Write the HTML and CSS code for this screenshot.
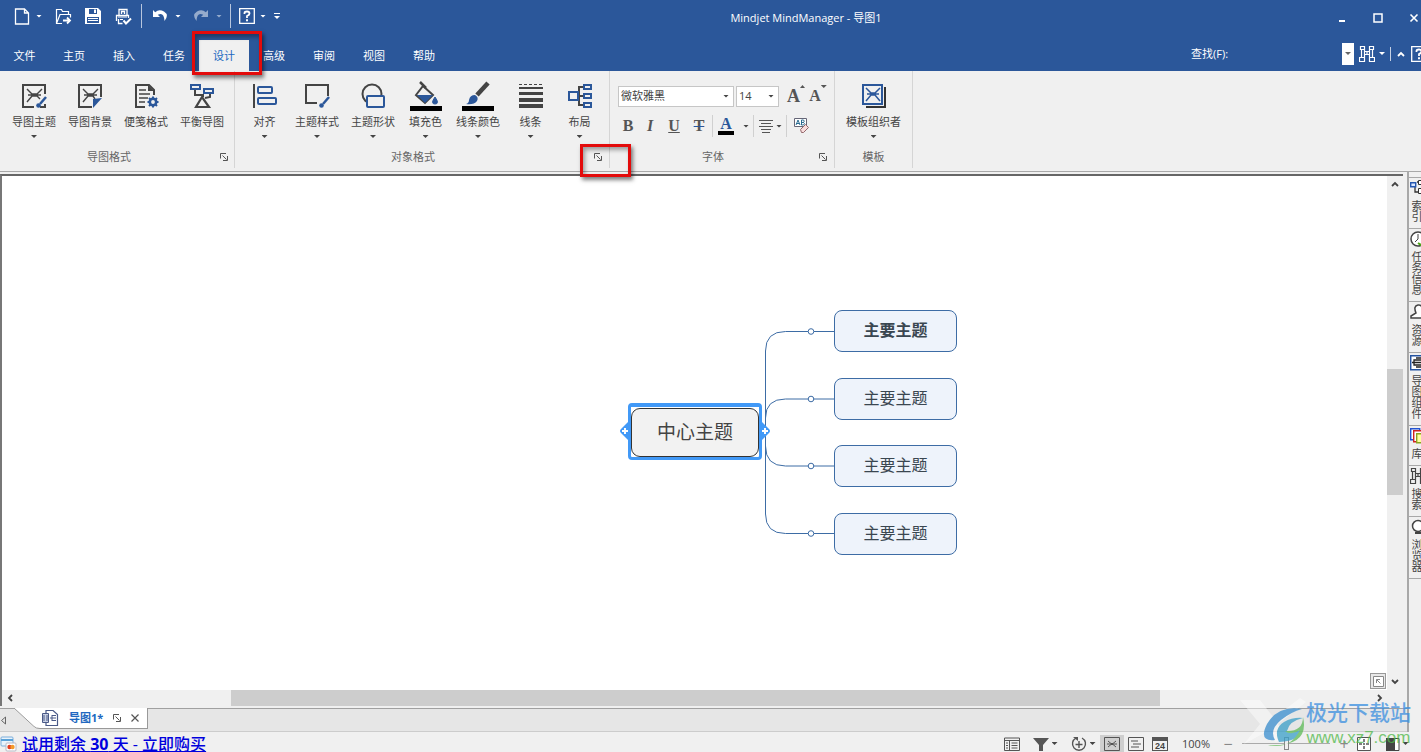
FILE: index.html
```html
<!DOCTYPE html>
<html lang="zh-CN">
<head>
<meta charset="utf-8">
<title>Mindjet MindManager - 导图1</title>
<link rel="stylesheet" href="styles.css">
</head>
<body>
<svg class="defs" width="0" height="0" aria-hidden="true">
  <symbol id="launch" viewBox="0 0 8 8"><path d="M.5 5.500V.5H6M2.500 2.500l4 4M7.500 3v4.500H3" fill="none" stroke="#555"/></symbol>
  <symbol id="help" viewBox="0 0 16 16"><path d="M.7.7h14.600v14.600H.7z" fill="none" stroke="#fff" stroke-width="1.300"/><path d="M5.500 6V5q0-1.500 2.500-1.500T10.500 5.500Q10.500 7 8 8v2" fill="none" stroke="#fff" stroke-width="1.800"/><path d="M7 11.300h2v2H7z" fill="#fff"/></symbol>
  <symbol id="binoc" viewBox="0 0 16 16"><path d="M1.500.5h4v3h-4zM10.500.5h4v3h-4zM2.500 3.500v8M5.500 3.500v8M10.500 3.500v8M13.500 3.500v8M.5 11.500h5v4h-5zM10.500 11.500h5v4h-5zM5.500 5.500h5M5.500 8.500h5M8 5.500v3" fill="none" stroke="currentColor" stroke-width="1.200"/></symbol>
</svg>

<header class="top">
  <div class="titlebar">
    <div class="quick">
      <button class="q q-new" aria-label="新建"><svg width="16" height="17"><path d="M1.500 1h9l4 4v11h-13zM10.500 1v4h4" fill="none" stroke="#fff" stroke-width="1.300"/></svg></button>
      <button class="q-more" aria-label="新建选项"><i class="caret"></i></button>
      <button class="q" aria-label="打开"><svg width="17" height="17"><path d="M7 15.500H1.500V1.500h5l1 2h6v3M1.500 15.500l3.500-9h10.500v3" fill="none" stroke="#fff" stroke-width="1.200"/><path d="M8 12.500h6M12 9.500l3 3-3 3" fill="none" stroke="#fff" stroke-width="1.800"/></svg></button>
      <button class="q" aria-label="保存"><svg width="16" height="16"><path fill="#fff" fill-rule="evenodd" d="M0 0h13l3 3v13H0zM4 1v5h8V1zM2 9v6h12V9z"/><path fill="#fff" d="M9 1.500h2V5H9zM3 10h10v1H3zM3 12h10v1H3z"/></svg></button>
      <button class="q" aria-label="打印"><svg width="17" height="17"><path d="M4 7V1.500h8V7M6.500 6V3.500h3V6M1.500 13V7.500h12V10M3.500 11v4.500h4" fill="none" stroke="#fff" stroke-width="1.300"/><path d="M3 9h9M5 11.500h3" stroke="#fff"/><path d="M8.500 12.500l2.500 3 5-5" fill="none" stroke="#fff" stroke-width="2"/></svg></button>
      <span class="q-sep"></span>
      <button class="q" aria-label="撤消"><svg width="16" height="14"><path d="M1 1v7h7L5.800 5.800Q12 2.500 12.500 12 17.500 6 12 2.500 7-.5 3.200 3.200z" fill="#fff"/></svg></button>
      <button class="q-more" aria-label="撤消选项"><i class="caret"></i></button>
      <button class="q faded" aria-label="重做"><svg width="16" height="14"><path d="M15 1v7H8l2.200-2.200Q4 2.500 3.500 12-1.500 6 4 2.500 9-.5 12.800 3.200z" fill="#fff"/></svg></button>
      <button class="q-more faded" aria-label="重做选项"><i class="caret"></i></button>
      <span class="q-sep"></span>
      <button class="q q-help" aria-label="帮助"><svg width="16" height="16"><use href="#help"/></svg></button>
      <button class="q-more" aria-label="帮助选项"><i class="caret"></i></button>
      <button class="q-cust" aria-label="自定义"><i class="bar"></i><i class="caret"></i></button>
    </div>
    <h1 class="title">Mindjet MindManager - 导图1</h1>
    <div class="winctl">
      <button aria-label="最小化"><svg width="10" height="10"><path d="M2 8h6" stroke="#fff" stroke-width="2"/></svg></button>
      <button aria-label="最大化"><svg width="10" height="10"><path d="M1 1h8v8H1z" fill="none" stroke="#fff" stroke-width="1.500"/></svg></button>
      <button aria-label="关闭"><svg width="10" height="10"><path d="M1.500 1.500l7 7M8.500 1.500l-7 7" stroke="#fff" stroke-width="1.600"/></svg></button>
    </div>
  </div>
  <div class="menubar">
    <nav class="tabs">
      <button>文件</button><button>主页</button><button>插入</button><button>任务</button><button class="on">设计</button><button>高级</button><button>审阅</button><button>视图</button><button>帮助</button>
    </nav>
    <div class="find">
      <label for="find">查找(F):</label>
      <input id="find" type="text">
      <button class="find-drop" aria-label="查找记录"><i class="caret"></i></button>
      <button class="find-go" aria-label="查找"><svg width="16" height="16"><use href="#binoc"/></svg><i class="caret"></i></button>
      <span class="find-sep"></span>
      <button class="find-up" aria-label="折叠功能区"><svg width="8" height="6"><path d="M1 5l3-3 3 3" fill="none" stroke="#fff" stroke-width="1.800"/></svg></button>
      <button class="find-help" aria-label="帮助"><svg width="16" height="16"><use href="#help"/></svg></button>
    </div>
  </div>
</header>

<section class="ribbon">
  <div class="group">
    <div class="tools">
      <button class="tool"><svg width="26" height="26"><path d="M24 11V2H2v22h11M19 24h5v-3" fill="none" stroke="#444" stroke-width="2"/><path d="M6 6l5 5h5l5-5M6 19l5-6h5l3 3M7 12h13" fill="none" stroke="#444" stroke-width="1.400"/><path d="M25 14l-6 7" stroke="#2b579a" stroke-width="2.500"/><circle cx="17.500" cy="22.500" r="2.300" fill="#2b579a"/></svg>导图主题<i class="caret"></i></button>
      <button class="tool"><svg width="26" height="26"><path d="M24 14V2H2v22h13" fill="none" stroke="#444" stroke-width="2"/><path d="M6 6l5 5h5l5-5M6 19l5-6h5l2 3M7 12h13" fill="none" stroke="#444" stroke-width="1.400"/><path d="M25 15l-9 10v-9z" fill="#2b579a"/></svg>导图背景</button>
      <button class="tool"><svg width="26" height="26"><path d="M12 24H3V2h13l5 5v5" fill="none" stroke="#444" stroke-width="2"/><path d="M15 2v6h6z" fill="#444"/><path d="M6 7h7M6 11h11M6 15h9M6 19h6" stroke="#444" stroke-width="1.300"/><circle cx="20" cy="19" r="3.200" fill="none" stroke="#2b579a" stroke-width="2.600"/><path d="M20 13.500v2M20 22.500v2M14.500 19h2M23.500 19h2M16 15l1.500 1.500M22.500 21.500L24 23M24 15l-1.500 1.500M17.500 21.500L16 23" stroke="#2b579a" stroke-width="2"/></svg>便笺格式</button>
      <button class="tool"><svg width="26" height="26"><path d="M6 6v6h8M21 10v4l-5 1M14 11v3" fill="none" stroke="#444" stroke-width="2"/><path d="M2 2h9v4H2zM15 6h9v4h-9z" fill="#f0f0f0" stroke="#2b579a" stroke-width="2"/><path d="M13 14L7 24h13z" fill="none" stroke="#444" stroke-width="2.200"/></svg>平衡导图</button>
    </div>
    <div class="gname"><span>导图格式</span><button class="launch" aria-label="导图格式选项"><svg width="8" height="8"><use href="#launch"/></svg></button></div>
  </div>

  <div class="group">
    <div class="tools">
      <button class="tool"><svg width="26" height="26"><path d="M2 1v24" stroke="#444" stroke-width="2"/><rect x="6" y="4" width="14" height="6" rx="1" fill="none" stroke="#2b579a" stroke-width="2"/><rect x="6" y="15" width="18" height="6" rx="1" fill="none" stroke="#2b579a" stroke-width="2"/></svg>对齐<i class="caret"></i></button>
      <button class="tool"><svg width="26" height="26"><path d="M13 20H2V2h22v11" fill="none" stroke="#444" stroke-width="2"/><path d="M25 14l-6 7" stroke="#2b579a" stroke-width="2.500"/><circle cx="17.500" cy="22.500" r="2.300" fill="#2b579a"/></svg>主题样式<i class="caret"></i></button>
      <button class="tool"><svg width="26" height="26"><circle cx="12" cy="11" r="9.500" fill="none" stroke="#444" stroke-width="2"/><rect x="7" y="13" width="17" height="11" rx="1" fill="#f0f0f0" stroke="#2b579a" stroke-width="2"/></svg>主题形状<i class="caret"></i></button>
      <button class="tool"><svg width="32" height="30"><path d="M13 5l10 9-8 8-9-8z" fill="none" stroke="#444" stroke-width="2"/><path d="M7 14h16l-8 8z" fill="#2b579a"/><path d="M10 1l6 6" stroke="#444" stroke-width="2.500"/><path d="M25 16q-5 7 0 7t0-7" fill="#2b579a" stroke="#2b579a"/><path d="M0 25h32v5H0z"/></svg>填充色<i class="caret"></i></button>
      <button class="tool"><svg width="32" height="30"><path d="M26 2L15 14" stroke="#444" stroke-width="4.500"/><path d="M13 14q4 2 2 6-3 4-11 3 3-1 3-4 1-5 6-5" fill="#2b579a"/><path d="M0 25h32v5H0z"/></svg>线条颜色<i class="caret"></i></button>
      <button class="tool"><svg width="26" height="26"><path d="M1 1.500h24" stroke="#444" stroke-dasharray="3 2"/><path d="M1 5h24" stroke="#444" stroke-width="2"/><path d="M1 10.500h24" stroke="#444" stroke-width="3"/><path d="M1 17h24M1 23h24" stroke="#444" stroke-width="4"/></svg>线条<i class="caret"></i></button>
      <button class="tool"><svg width="26" height="26"><path d="M17 4h-5v18h5M11 13h6" fill="none" stroke="#444" stroke-width="2"/><path d="M2 9h9v8H2zM17 2h7v4h-7zM17 11h7v4h-7zM17 20h7v4h-7z" fill="#f0f0f0" stroke="#2b579a" stroke-width="2"/></svg>布局<i class="caret"></i></button>
    </div>
    <div class="gname"><span>对象格式</span><button class="launch" aria-label="对象格式选项"><svg width="8" height="8"><use href="#launch"/></svg></button></div>
  </div>

  <div class="group">
    <div class="fonts">
      <div class="frow">
        <span class="pick face"><select aria-label="字体"><option>微软雅黑</option></select><i class="caret"></i></span>
        <span class="pick size"><select aria-label="字号"><option>14</option></select><i class="caret"></i></span>
        <button class="grow" aria-label="增大字号">A<i class="up"></i></button>
        <button class="grow small" aria-label="减小字号">A<i class="caret"></i></button>
      </div>
      <div class="frow">
        <button class="f">B</button>
        <button class="f"><em>I</em></button>
        <button class="f"><u>U</u></button>
        <button class="f strike"><s>T</s></button>
        <span class="f-sep"></span>
        <button class="fcolor" aria-label="字体颜色"><b>A</b></button>
        <button class="fdrop" aria-label="字体颜色选项"><i class="caret"></i></button>
        <span class="f-sep"></span>
        <button class="falign" aria-label="对齐方式"><svg width="16" height="14"><path d="M1 1.500h14M3 4.500h10M1 7.500h14M3 10.500h10M4 13.500h8" stroke="#555"/></svg><i class="caret"></i></button>
        <span class="f-sep"></span>
        <button class="fclear" aria-label="清除格式"><svg width="18" height="18"><path d="M1.500 1.500h12v8h-12z" fill="#fff" stroke="#667"/><path d="M3 8l2-5 2 5M3.500 6.500h3M8.500 3v5h2q2-1.500 0-2.500h-2 2q1.500-1.500 0-2.500z" fill="none" stroke="#2b6c91"/><path d="M7.500 12.500l5-5 3 3-5 5h-2z" fill="#f8dcdc" stroke="#93686c"/></svg></button>
      </div>
    </div>
    <div class="gname"><span>字体</span><button class="launch" aria-label="字体选项"><svg width="8" height="8"><use href="#launch"/></svg></button></div>
  </div>

  <div class="group">
    <div class="tools">
      <button class="tool"><svg width="26" height="26"><path d="M24 4v20H5" fill="none" stroke="#333" stroke-width="2"/><path d="M2 2h19v19H2z" fill="#f0f0f0" stroke="#2b579a" stroke-width="2"/><path d="M5 5l5 5h4l5-5M5 18l5-6h4l5 6M6 11h12" fill="none" stroke="#2b579a" stroke-width="1.500"/></svg>模板组织者<i class="caret"></i></button>
    </div>
    <div class="gname solo"><span>模板</span></div>
  </div>
</section>

<main class="work">
  <div class="doc">
    <div class="view">
      <div class="canvas">
        <div class="map">
          <svg class="links" width="338" height="245" fill="none" stroke="#3d6ca5"><path d="M146.500 122V41q0-19.500 20-19.500H215M146.500 122v-14q0-19 20-19H215M146.500 122v14q0 20 20 20H215M146.500 122v82q0 19.500 20 19.500H215"/><g fill="#fff"><circle cx="192" cy="21.500" r="2.800"/><circle cx="192" cy="89" r="2.800"/><circle cx="192" cy="156" r="2.800"/><circle cx="192" cy="223.500" r="2.800"/></g></svg>
          <div class="center"><div>中心主题</div></div>
          <svg class="handle left" width="11" height="22"><path d="M10 1v20L2 13q-2-2 0-4z" fill="#4199f7"/><path d="M6 8v6M3 11h6" stroke="#fff" stroke-width="2"/></svg>
          <svg class="handle right" width="11" height="22"><path d="M1 1v20l8-8q2-2 0-4z" fill="#4199f7"/><path d="M5 8v6M2 11h6" stroke="#fff" stroke-width="2"/></svg>
          <div class="topic t1">主要主题</div>
          <div class="topic t2">主要主题</div>
          <div class="topic t3">主要主题</div>
          <div class="topic t4">主要主题</div>
        </div>
        <button class="overview" aria-label="导航"><svg width="11" height="11"><path d="M.5.5h10v10H.5z" fill="#fff" stroke="#888"/><path d="M3.500 7V3.500H7M3.500 3.500l4 4" fill="none" stroke="#888"/></svg></button>
      </div>
      <div class="vscroll">
        <svg width="8" height="6"><path d="M1 5l3-3 3 3" fill="none" stroke="#444" stroke-width="1.800"/></svg>
        <div class="track"><i></i></div>
        <svg width="8" height="6"><path d="M1 1l3 3 3-3" fill="none" stroke="#444" stroke-width="1.800"/></svg>
      </div>
    </div>
    <div class="hscroll">
      <svg width="6" height="8"><path d="M5 1L2 4l3 3" fill="none" stroke="#444" stroke-width="1.800"/></svg>
      <div class="track"><i></i></div>
      <svg width="6" height="8"><path d="M1 1l3 3-3 3" fill="none" stroke="#444" stroke-width="1.800"/></svg>
    </div>
    <div class="docbar">
      <button class="prev" aria-label="上一个"><svg width="7" height="9"><path d="M5.500 1v7l-4-3.500z" fill="none" stroke="#666"/></svg></button>
      <svg class="slant" width="26" height="21"><path d="M0 0h26v20h-5z" fill="#fff"/><path d="M0 0l20 18.500q2 2 6 2" fill="none" stroke="#999"/></svg>
      <div class="doctab">
        <svg width="17" height="16"><path d="M4 3V.500h7l4.500 4V15.500H4V13" fill="#fff" stroke="#4a5a88" stroke-width="1.200"/><path d="M.5 3.500h6v9h-6z" fill="#c9d1e4" stroke="#4a5a88"/><path d="M2 5v6M5 5v6M8 8h4M10 5v6M10 5.500h4M10 10.500h4M12 8h2" stroke="#4a5a88"/></svg>
        <b>导图1*</b>
        <button aria-label="窗口选项"><svg width="8" height="8"><use href="#launch"/></svg></button>
        <button aria-label="关闭导图"><svg width="8" height="8"><path d="M.5.5l7 7M7.500.5l-7 7" stroke="#555" stroke-width="1.200"/></svg></button>
      </div>
    </div>
  </div>
  <aside class="side">
    <button><svg width="16" height="16"><path d="M5 6v6h5M10 2h-3" fill="none" stroke="#333" stroke-width="1.300"/><path d="M.700 2.700h5v4h-5z" fill="#d8e6ff" stroke="#2457b0" stroke-width="1.400"/><path d="M8.500.5h7v4h-7zM8.500 8.500h7v5h-7z" fill="#fff" stroke="#333"/></svg><span>索引</span></button>
    <button><svg width="16" height="16"><circle cx="8" cy="8" r="7" fill="#fff" stroke="#444" stroke-width="1.500"/><path d="M8 3v5l-3 3" fill="none" stroke="#444"/><path d="M8 12l3 2 4-5" fill="none" stroke="#4ba515" stroke-width="2"/></svg><span>任务信息</span></button>
    <button><svg width="16" height="16"><path d="M1 14v-2l5-3q-3-7 2-8t4 8l4 3v2z" fill="#fff" stroke="#444" stroke-width="1.500"/></svg><span>资源</span></button>
    <button><svg width="16" height="16"><path d="M.7.700h15v14H.7z" fill="#fff" stroke="#2453a0" stroke-width="1.500"/><path d="M4 5h8v5H4zM6 3h7M2 7.500h10M6 12h7" fill="none" stroke="#222" stroke-width="1.300"/></svg><span>导图组件</span></button>
    <button><svg width="16" height="16"><path d="M.7.7h9v11h-9z" fill="#fff" stroke="#2453d0" stroke-width="1.400"/><path d="M3.700 2.700h9v11h-9z" fill="#fff" stroke="#d02020" stroke-width="1.400"/><path d="M6.700 5.700h9v9h-9z" fill="#ffffa0" stroke="#8aa320" stroke-width="1.400"/></svg><span>库</span></button>
    <button><svg width="16" height="16"><use href="#binoc"/></svg><span>搜索</span></button>
    <button><svg width="16" height="16"><circle cx="8" cy="7" r="5.500" fill="#fff" stroke="#444" stroke-width="1.500"/><path d="M5 14h9" stroke="#444" stroke-width="2"/></svg><span>浏览器</span></button>
  </aside>
</main>

<footer class="status">
  <svg width="17" height="16"><rect x="1" y="1" width="12" height="9" rx="1" fill="#e9f3fb" stroke="#7caedb"/><path d="M1 3h12v2H1z" fill="#5aa2d8"/><rect x="6" y="7" width="10" height="8" rx="1" fill="#fff" stroke="#b9b9c4"/><circle cx="9.500" cy="11" r="2.200" fill="#e33c1f"/><circle cx="12.500" cy="11" r="2.200" fill="#f49a2b"/></svg>
  <a href="#buy">试用剩余 <b>30</b> 天 - 立即购买</a>
  <div class="stools">
    <button aria-label="大纲"><svg width="16" height="14"><path d="M.500 1h15v12.500H.5zM1 3.500h14M5.500 3v10M7.500 6h6M7.500 8.500h6M7.500 11h6M2 6h2M2 8.500h2M2 11h2" fill="none" stroke="#555"/></svg></button>
    <button class="wide" aria-label="筛选"><svg width="16" height="14"><path d="M0 1h16l-6 7v6H6V8z" fill="#555"/></svg><i class="caret"></i></button>
    <button class="wide" aria-label="缩放"><svg width="16" height="16"><path d="M5 2a6.500 6.500 0 1 0 6 0M8 5v7M4.500 8.500h7" fill="none" stroke="#555" stroke-width="1.400"/><path d="M2 1h5v4z" fill="#555"/></svg><i class="caret"></i></button>
    <button class="sel" aria-label="导图视图"><svg width="16" height="14"><path d="M.500.5h15v13H.5zM4 4l3 2.500h2L12 4M4 10l3-2.500h2l3 2.500M3 7h10" fill="none" stroke="#555"/></svg></button>
    <button aria-label="大纲视图"><svg width="16" height="14"><path d="M.500.5h15v13H.5zM3 4h7M5 7h8M3 10h8" fill="none" stroke="#555"/></svg></button>
    <button class="cal" aria-label="日程视图"><span>24</span></button>
    <output for="zoom">100%</output>
    <span class="minus">−</span>
    <input id="zoom" type="range" min="0" max="100" value="50" aria-label="缩放比例">
    <span class="minus">+</span>
    <button class="fit" aria-label="适合窗口"><svg width="14" height="14"><path d="M.500.5h13v13H.5z" fill="#fff" stroke="#555"/><path d="M7 2v3M7 9v3M2 7h3M9 7h3M6 7h2" stroke="#555" stroke-width="1.500"/></svg></button>
    <button class="wide" aria-label="面板"><svg width="14" height="14"><path d="M0 1h9v13H0z" fill="#444"/><path d="M9 1.500h4v12H9" fill="#fff" stroke="#444"/></svg><i class="caret"></i></button>
  </div>
</footer>

<div class="mark mark-tab"></div>
<div class="mark mark-launch"></div>

<div class="brand">
  <svg width="66" height="54"><path d="M0 2h20l14 18L60 0l6 4-28 22 8 12-10 6-10-10-22 12 16-20z" fill="#fff" opacity=".6"/><path d="M62 11Q38 7 27 26q-9 18 8 16-6-10 6-20 10-8 21-11" fill="#3a8fd0"/><path d="M39 44q-6-13 5-20 9-5 19-4-14 3-16 13 11 2 16-4-2 14-24 15" fill="#3a9fc8"/><path d="M28 47q22 5 32-15-9 6-15 1 18 1 18-14 7 30-35 28" fill="#5cba55"/></svg>
  <p><strong>极光下载站</strong><span>www.xz7.com</span></p>
</div>
</body>
</html>
```

FILE: styles.css
```css
* { box-sizing: border-box; }
html, body { height: 100%; }
body {
  margin: 0;
  display: flex;
  flex-direction: column;
  overflow: hidden;
  position: relative;
  background: #f0f0f0;
  color: #444;
  font: 11px/16px "Open Sans", "Noto Sans CJK SC", sans-serif;
}
button, input, select { font: inherit; color: inherit; }
button {
  display: flex;
  align-items: center;
  justify-content: center;
  padding: 0;
  border: 0;
  background: none;
  flex: none;
}
svg { display: block; flex: none; }
.defs { position: absolute; }
.caret {
  width: 6px;
  height: 3px;
  flex: none;
  background: currentColor;
  clip-path: polygon(0 0, 100% 0, 50% 100%);
}

/* title bar and tabs */
.top { background: #2b579a; color: #fff; flex: none; }
.titlebar { display: flex; height: 36px; }
.quick { display: flex; align-items: center; height: 32px; padding-left: 8px; }
.q { width: 30px; height: 24px; }
.q-new { width: 28px; }
.q-help { width: 26px; }
.q-more { width: 11px; height: 24px; justify-content: flex-start; }
.q-new + .q-more { width: 12px; }
.q-sep { width: 1px; height: 24px; margin: 0 3px; background: #b8c6de; }
.faded { opacity: .5; }
.q-cust { width: 12px; height: 24px; flex-direction: column; gap: 2px; }
.bar { width: 6px; height: 1px; background: #fff; }
.title { flex: 1; margin: 0; text-align: center; font-size: 11px; font-weight: 400; line-height: 36px; }
.winctl { display: flex; align-items: center; gap: 26px; width: 92px; padding-left: 8px; flex: none; overflow: hidden; }
.menubar { display: flex; justify-content: space-between; height: 35px; }
.tabs { display: flex; align-items: flex-end; }
.tabs button { width: 50px; height: 31px; }
.tabs button:first-child { width: 49px; }
.tabs .on { background: #f0f0f0; color: #2168c0; }
.find { display: flex; align-items: center; width: 230px; overflow: hidden; }
.find label { flex: none; width: 44px; }
.find input { flex: 1; min-width: 0; height: 22px; border: 0; background: transparent; }
.find-drop { width: 12px; height: 22px; background: #fff; color: #666; }
.find-go { gap: 4px; margin: 0 5px; }
.find-sep { flex: none; width: 1px; height: 14px; background: #c5d0e4; }
.find-up { width: 20px; height: 22px; }
.find-help { width: 10px; justify-content: flex-start; overflow: hidden; }

/* ribbon */
.ribbon { display: flex; flex: none; height: 101px; padding-bottom: 3px; border-bottom: 1px solid #a8a8a8; }
.group { display: flex; flex-direction: column; justify-content: space-between; padding: 10px 4px 0 6px; border-right: 1px solid #d5d5d5; }
.group + .group { padding-left: 5px; padding-right: 5px; }
.tools { display: flex; }
.tool { flex-direction: column; justify-content: flex-start; min-width: 49px; height: 62px; padding: 0 6px; line-height: 20px; }
.tool svg { height: 31px; padding-top: 2px; }
.tool svg[height="30"] { padding: 0; }
.tool .caret { margin-top: 3px; }
.gname { display: flex; align-items: center; height: 22px; padding-right: 2px; color: #666; }
.gname span { flex: 1; margin-right: 8px; text-align: center; }
.gname.solo { padding: 0; }
.gname.solo span { margin: 0; }
.launch { width: 8px; height: 16px; }

.fonts { display: flex; flex-direction: column; gap: 8px; padding: 4px 0 0 3px; }
.frow { display: flex; align-items: center; height: 22px; }
.pick { display: flex; align-items: center; height: 21px; margin-right: 2px; padding-right: 4px; background: #fff; border: 1px solid #c6c6c6; }
.pick select { appearance: none; flex: 1; min-width: 0; height: 19px; border: 0; padding: 0 2px; background: transparent; }
.face { width: 116px; }
.size { width: 43px; }
.grow { width: 22px; height: 22px; align-items: flex-start; font: bold 18px/22px "Liberation Serif", serif; color: #555; }
.size + .grow { margin-left: 4px; }
.small { font-size: 16px; }
.up { width: 5px; height: 3px; background: #555; clip-path: polygon(0 100%, 100% 100%, 50% 0); }
.f { width: 24px; font: bold 16px/20px "Liberation Serif", serif; color: #555; }
.frow .f:first-child { width: 20px; }
.frow .strike { width: 26px; }
.strike s { text-decoration-color: #2b579a; }
.f-sep { flex: none; width: 1px; height: 22px; background: #d0d0d0; }
.fcolor { width: 26px; color: #2b579a; font: 16px/14px "Liberation Serif", serif; }
.fcolor b { width: 16px; border-bottom: 4px solid #000; }
.fdrop { width: 14px; }
.falign { width: 32px; gap: 2px; }
.fclear { width: 30px; }

/* workspace */
.work { flex: 1; min-height: 0; display: flex; }
.doc { flex: 1; min-width: 0; display: flex; flex-direction: column; padding-top: 2px; border-right: 2px solid #a8a8a8; }
.view { flex: 1; min-height: 0; display: flex; border-top: 2px solid #666; border-left: 2px solid #777; margin-right: 4px; }
.canvas { flex: 1; position: relative; overflow: hidden; background: #fff; }
.vscroll { width: 16px; display: flex; flex-direction: column; align-items: center; padding: 5px 0; gap: 6px; background: #f0f0f0; }
.track { flex: 1; display: flex; width: 100%; }
.track i { background: #cdcdcd; }
.vscroll .track { flex-direction: column; }
.vscroll .track::before { content: ""; flex: 178; }
.vscroll .track i { flex: 127; }
.vscroll .track::after { content: ""; flex: 180; }
.hscroll { display: flex; align-items: center; gap: 4px; height: 16px; margin-right: 4px; padding: 0 20px 0 5px; border-left: 2px solid #777; background: #f0f0f0; }
.hscroll .track { height: 16px; }
.hscroll .track::before { content: ""; flex: 214; }
.hscroll .track i { flex: 928; }
.hscroll .track::after { content: ""; flex: 213; }

.map { position: absolute; left: 617px; top: 134px; width: 338px; height: 245px; }
.links { position: absolute; left: 0; top: 0; }
.topic { position: absolute; left: 215px; width: 123px; height: 42px; border: 1px solid #3d6ca5; border-radius: 8px; background: #eef3fb; color: #3a4650; font-size: 16px; line-height: 38px; text-align: center; }
.t1 { top: 0; font-weight: 700; }
.t2 { top: 68px; }
.t3 { top: 135px; }
.t4 { top: 203px; }
.center { position: absolute; left: 9px; top: 93px; width: 134px; height: 57px; padding-top: 1px; border: 3px solid #4199f7; border-top-width: 4px; border-radius: 4px; background: #fff; }
.center div { height: 49px; border: 1px solid #333; border-radius: 9px; background: #f2f2f2; font-size: 19px; line-height: 47px; text-align: center; }
.handle { position: absolute; top: 110px; }
.handle.left { left: 0; }
.handle.right { left: 141px; }
.overview { position: absolute; right: 1px; bottom: 1px; width: 16px; height: 16px; background: #e8e8e8; border: 1px solid #999; }

.docbar { display: flex; height: 24px; margin-top: 2px; background: #e6e6e6; border-top: 1px solid #a0a0a0; border-bottom: 1px solid #ccc; }
.prev { width: 14px; height: 22px; justify-content: flex-start; }
.slant { margin-top: -1px; }
.doctab { display: flex; align-items: center; gap: 10px; height: 21px; padding: 0 8px 0 2px; margin-top: -1px; background: #fff; border-right: 1px solid #999; border-bottom: 1px solid #999; color: #2168c0; }

.side { width: 12px; flex: none; overflow: hidden; padding-top: 5px; }
.side button { flex-direction: column; align-items: flex-start; width: 24px; gap: 4px; padding: 2px 0 6px 1px; border-top: 1px solid #a8a8a8; }
.side button:last-child { border-bottom: 1px solid #a8a8a8; }
.side span { writing-mode: vertical-rl; text-orientation: upright; line-height: 12px; }

/* status bar */
.status { display: flex; align-items: center; height: 20px; flex: none; padding-top: 3px; overflow: hidden; }
.status a { margin-left: 5px; color: #00d; font-size: 16px; line-height: 20px; font-weight: 500; text-decoration: underline; white-space: nowrap; }
.stools { display: flex; align-items: center; margin-left: auto; height: 20px; padding-right: 7px; }
.stools button { width: 24px; height: 18px; }
.stools .wide { width: 34px; gap: 3px; margin-left: 4px; }
.stools .sel { background: #cfcfcf; }
.cal span { width: 16px; height: 14px; border: 1px solid #555; border-top-width: 4px; font: bold 9px/10px "Liberation Sans", sans-serif; }
.stools output { width: 48px; text-align: center; }
.minus { width: 16px; font-size: 16px; color: #888; text-align: center; }
.stools input { appearance: none; width: 88px; height: 14px; margin: 0 6px; background: linear-gradient(#aaa, #aaa) center / 100% 1px no-repeat; }
.stools input::-webkit-slider-thumb { appearance: none; width: 5px; height: 13px; border: 1px solid #888; background: #f0f0f0; }

/* callout frames and site badge over the window */
.mark { position: absolute; border: 3px solid #e30b0b; box-shadow: 2px 3px 4px rgba(0, 0, 0, .5), inset 2px 3px 4px rgba(0, 0, 0, .35); pointer-events: none; }
.mark-tab { left: 192px; top: 31px; width: 70px; height: 44px; }
.mark-launch { left: 580px; top: 144px; width: 51px; height: 33px; }
.brand { position: absolute; right: 10px; bottom: 0; display: flex; opacity: .75; pointer-events: none; }
.brand p { margin: 0; display: flex; flex-direction: column; align-items: center; }
.brand strong { color: #3a8fe0; font-size: 21px; line-height: 28px; font-weight: 500; }
.brand span { color: #4fb848; font: 17px/24px "Liberation Sans", sans-serif; }
```
